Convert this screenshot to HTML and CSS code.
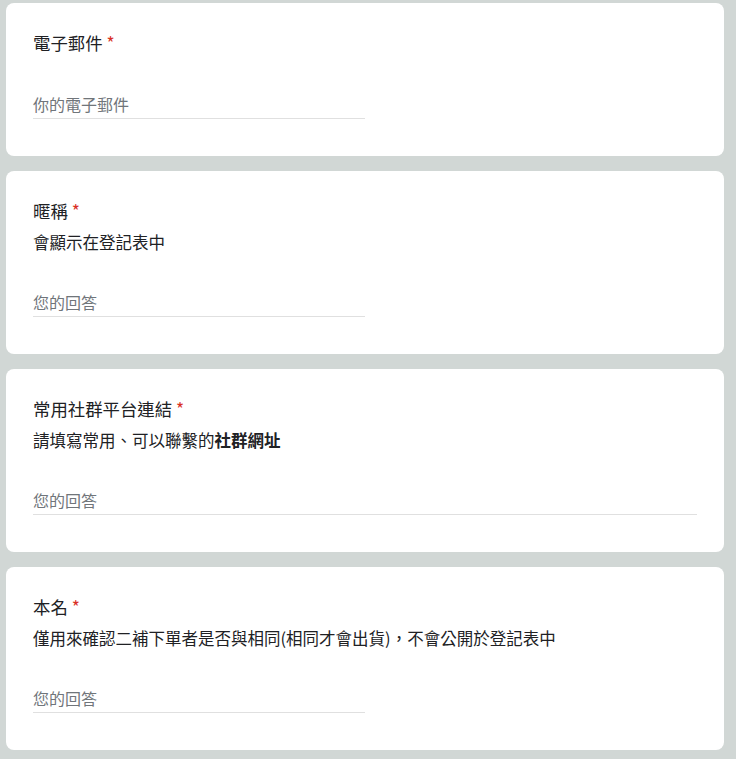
FILE: index.html
```html
<!DOCTYPE html>
<html lang="zh-Hant">
<head>
	<meta charset="UTF-8">
	<title>登記表</title>
	<link rel="stylesheet" href="styles.css">
</head>
<body>
	<div class="form">
		<div class="card">
			<div class="q-title">電子郵件 <span class="req">*</span></div>
			<div class="q-input half">你的電子郵件</div>
		</div>
		<div class="card">
			<div class="q-title">暱稱 <span class="req">*</span></div>
			<div class="q-desc">會顯示在登記表中</div>
			<div class="q-input half">您的回答</div>
		</div>
		<div class="card">
			<div class="q-title">常用社群平台連結 <span class="req">*</span></div>
			<div class="q-desc">請填寫常用、可以聯繫的<b>社群網址</b></div>
			<div class="q-input">您的回答</div>
		</div>
		<div class="card">
			<div class="q-title">本名 <span class="req">*</span></div>
			<div class="q-desc">僅用來確認二補下單者是否與相同(相同才會出貨)，不會公開於登記表中</div>
			<div class="q-input half">您的回答</div>
		</div>
	</div>
</body>
</html>
```

FILE: styles.css
```css
*{margin:0;padding:0;box-sizing:border-box;}
body{background:#d1d7d5;font-family:"Noto Sans CJK TC","Liberation Sans",sans-serif;color:#202124;}
.form{width:718px;margin:3px 0 0 6px;display:flex;flex-direction:column;gap:15px;}
.card{background:#fff;border-radius:8px;padding:24px 27px 37px;}
.q-title{font-size:17.4px;line-height:32px;}
.req{color:#d93025;}
.q-desc{font-size:16.5px;line-height:30px;}
.q-desc b{font-weight:700;}
.q-input{margin-top:31px;height:29px;line-height:28px;font-size:16px;color:#70757a;border-bottom:1px solid #e0e0e0;}
.q-input.half{width:332px;}
```
